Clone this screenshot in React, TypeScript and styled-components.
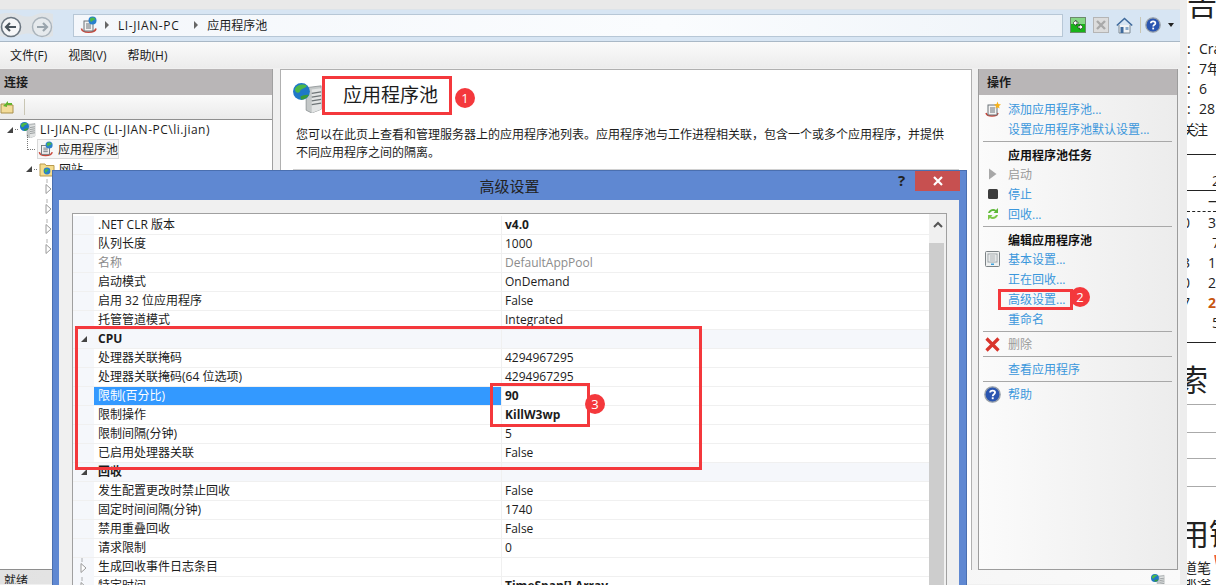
import styled, { createGlobalStyle } from "styled-components";

const GlobalStyle = createGlobalStyle`
  html, body {
    margin: 0;
    padding: 0;
    background: #fff;
  }
  body {
    font-family: "Open Sans", "Noto Sans CJK SC", sans-serif;
    font-size: 12px;
    color: #1c1c1c;
  }
`;

const Screen = styled.div`
  position: relative;
  display: flex;
  width: 1216px;
  height: 585px;
  overflow: hidden;
`;

const IisWindow = styled.div`
  display: flex;
  flex-direction: column;
  width: 1180px;
  height: 585px;
  background: #f0f0f0;
  flex: none;
`;

const TitleStrip = styled.div`
  height: 9px;
  background: #e9e9e9;
  flex: none;
`;

const AddressBar = styled.div`
  display: flex;
  align-items: center;
  height: 33px;
  box-sizing: border-box;
  padding-bottom: 1px;
  background: #d7e5f3;
  border-top: 1px solid #dde3e8;
  border-bottom: 1px solid #a9b8c6;
  flex: none;
`;

const NavButtons = styled.div`
  display: flex;
  align-items: center;
  width: 73px;
  padding-top: 2px;
`;

const AddressField = styled.div`
  display: flex;
  align-items: center;
  width: 990px;
  height: 23px;
  box-sizing: border-box;
  padding-left: 6px;
  background: linear-gradient(90deg, #f4f7fb, #fafcfe 60%, #eff4f9);
  border: 1px solid #b7c7d6;
`;

const Crumb = styled.span<{ $latin?: boolean }>`
  margin-left: 9px;
  letter-spacing: ${(p) => (p.$latin ? "0.6px" : "0")};
`;

const CrumbArrow = styled.span<{ $gap: number }>`
  width: 0;
  height: 0;
  margin-left: ${(p) => p.$gap}px;
  border-left: 4px solid #666;
  border-top: 4px solid transparent;
  border-bottom: 4px solid transparent;
`;

const BarIcons = styled.div`
  display: flex;
  align-items: center;
  margin-left: 7px;
  gap: 7px;
`;

const BarHelp = styled.span`
  display: flex;
  margin-left: -3px;
`;

const MenuBar = styled.div`
  display: flex;
  align-items: center;
  gap: 21px;
  height: 26px;
  padding-left: 10px;
  background: linear-gradient(#fafafa, #ececec);
  flex: none;
`;

const Panels = styled.div`
  display: flex;
  height: 502px;
  padding-top: 1px;
  box-sizing: border-box;
  flex: none;
`;

const LeftPanel = styled.div`
  width: 273px;
  box-sizing: border-box;
  background: #fff;
  border-right: 1px solid #a0a0a0;
  border-bottom: 1px solid #8e8e8e;
  flex: none;
`;

const PanelHead = styled.div<{ $pad: number }>`
  display: flex;
  align-items: center;
  height: 26px;
  padding-left: ${(p) => p.$pad}px;
  background: #b9b6b7;
  font-weight: 700;
  font-size: 12px;
`;

const TreeTools = styled.div`
  display: flex;
  align-items: center;
  gap: 10px;
  height: 25px;
  box-sizing: border-box;
  background: linear-gradient(#fafafa, #eaeaea);
  border-bottom: 1px solid #8e8e8e;
`;

const ToolSep = styled.span`
  width: 1px;
  height: 16px;
  background: #c9c6b4;
`;

const Tree = styled.div`
  display: flex;
  flex-direction: column;
`;

const TreeRow = styled.div<{ $indent: number; $h?: number }>`
  display: flex;
  align-items: center;
  gap: 2px;
  height: ${(p) => p.$h ?? 20}px;
  padding-left: ${(p) => p.$indent}px;
  white-space: nowrap;
`;

const TreeOpen = styled.span`
  width: 0;
  height: 0;
  border-right: 6px solid #444;
  border-top: 6px solid transparent;
`;

const TreeDots = styled.span<{ $w: number; $stem?: boolean }>`
  position: relative;
  width: ${(p) => p.$w}px;
  border-top: 1px dotted #777;
  ${(p) =>
    p.$stem
      ? `&::before {
          content: "";
          position: absolute;
          left: 0;
          bottom: 0;
          height: 15px;
          border-left: 1px dotted #777;
        }`
      : ""}
`;

const TreeLabel = styled.span<{ $latin?: boolean }>`
  margin-left: 2px;
  letter-spacing: ${(p) => (p.$latin ? "0.5px" : "0")};
`;

const TreeSelected = styled.span`
  display: inline-flex;
  align-items: center;
  gap: 4px;
  height: 20px;
  width: 82px;
  box-sizing: border-box;
  border: 1px solid #d9d9d9;
  background: #f7f7f7;
`;

const CenterPanel = styled.div`
  width: 692px;
  margin-left: 7px;
  box-sizing: border-box;
  padding: 13px 12px 0 12px;
  background: #fff;
  border: 1px solid #b0b0b0;
  border-bottom: none;
  flex: none;
`;

const PageHead = styled.div`
  display: flex;
  align-items: flex-start;
  gap: 20px;
  height: 31px;
`;

const PageTitle = styled.h1`
  margin: 0;
  font-size: 19px;
  line-height: 24px;
  font-weight: 400;
`;

const PageText = styled.p`
  width: 650px;
  margin: 12px 0 0 3px;
  line-height: 18px;
`;

const PageRule = styled.div`
  height: 1px;
  margin-top: 7px;
  background: #d0d0d0;
`;

const ActionPanel = styled.div`
  width: 200px;
  margin-left: 6px;
  box-sizing: border-box;
  background: linear-gradient(90deg, #fbfbfb, #ececec);
  border: 1px solid #9c9c9c;
  border-top: none;
  flex: none;
`;

const ActionList = styled.div`
  display: flex;
  flex-direction: column;
  padding-top: 4px;
`;

const ActionRow = styled.div<{ $h?: number; $muted?: boolean; $bold?: boolean }>`
  display: flex;
  align-items: center;
  height: ${(p) => p.$h ?? 20}px;
  font-weight: ${(p) => (p.$bold ? 700 : 400)};
  color: ${(p) => (p.$bold ? "#111" : p.$muted ? "#9a9a9a" : "#3b97dc")};
  white-space: nowrap;
`;

const ActionIcon = styled.span`
  display: flex;
  align-items: center;
  justify-content: center;
  width: 27px;
  margin-right: 2px;
  flex: none;
`;

const ActionSep = styled.div<{ $tight?: boolean }>`
  height: 1px;
  margin: 2px 5px ${(p) => (p.$tight ? 2 : 3)}px 4px;
  background: #a8a8a8;
  flex: none;
`;

const StatusBar = styled.div`
  display: flex;
  align-items: flex-start;
  justify-content: space-between;
  height: 14px;
  padding: 1px 15px 0 4px;
  box-sizing: border-box;
  overflow: hidden;
  background: linear-gradient(90deg, #e2e2e2, #f4f4f4 70%, #fafafa);
  flex: none;
`;

const StatusIcon = styled.span`
  display: flex;
  margin-top: 3px;
`;

const SideStrip = styled.div`
  width: 36px;
  box-sizing: border-box;
  display: flex;
  flex-direction: column;
  background: #fff;
  border-left: 7px solid #ededed;
  overflow: hidden;
  flex: none;
  font-size: 14px;
  color: #222;
`;

const StripRow = styled.div<{ $h: number; $line?: string; $big?: boolean; $plain?: boolean }>`
  display: ${(p) => (p.$big || p.$plain ? "flex" : "grid")};
  grid-template-columns: 12px 1fr;
  align-items: ${(p) => (p.$big ? "flex-start" : "center")};
  height: ${(p) => p.$h}px;
  box-sizing: border-box;
  white-space: nowrap;
  overflow: hidden;
  flex: none;
  ${(p) => (p.$line ? `border-bottom: ${p.$line};` : "")}
  ${(p) => (p.$big ? "font-size: 30px; line-height: 30px;" : "")}
`;

const StripGlyph = styled.span<{ $shift?: number; $top?: number; $orange?: boolean }>`
  margin-left: ${(p) => p.$shift ?? 0}px;
  margin-top: ${(p) => p.$top ?? 0}px;
  color: ${(p) => (p.$orange ? "#c8560f" : "inherit")};
  font-weight: ${(p) => (p.$orange ? 700 : 400)};
  flex: none;
`;

const Dialog = styled.div`
  position: absolute;
  left: 52px;
  top: 170px;
  width: 915px;
  height: 420px;
  box-sizing: border-box;
  padding: 29px 7px 0 6px;
  background: #5f88d2;
  border: 1px solid #4a6fb0;
`;

const DialogTitle = styled.div`
  position: absolute;
  left: 0;
  right: 0;
  top: 4px;
  text-align: center;
  font-size: 15px;
  color: #222;
`;

const HelpMark = styled.span`
  position: absolute;
  left: 845px;
  top: -1px;
  font-size: 15px;
  font-weight: 700;
  color: #222;
`;

const CloseBtn = styled.span`
  position: absolute;
  right: 6px;
  top: 0;
  display: flex;
  align-items: center;
  justify-content: center;
  width: 45px;
  height: 20px;
  background: #c75050;
`;

const DialogClient = styled.div`
  height: 100%;
  box-sizing: border-box;
  padding: 13px 12px 0 13px;
  background: #f0f0f0;
`;

const Grid = styled.div`
  display: flex;
  height: 100%;
  box-sizing: border-box;
  background: #fff;
  border: 1px solid #a0a0a0;
  border-bottom: none;
`;

const GridBody = styled.div`
  flex: 1;
  min-width: 0;
  padding-top: 2px;
`;

const GridRow = styled.div<{ $section?: boolean }>`
  display: grid;
  grid-template-columns: 21px 407px 1fr;
  height: 19px;
  box-sizing: border-box;
  line-height: 18px;
  background: ${(p) => (p.$section ? "#f5f7fb" : "#fff")};
  border-bottom: 1px solid #f0f0f0;
`;

const Gutter = styled.div`
  display: flex;
  align-items: center;
  justify-content: center;
  background: #f5f7fb;
`;

const NameCell = styled.div<{ $sel?: boolean; $muted?: boolean; $bold?: boolean }>`
  padding-left: 4px;
  background: ${(p) => (p.$sel ? "#3399ff" : "transparent")};
  color: ${(p) => (p.$sel ? "#fff" : p.$muted ? "#8c8c8c" : "#1c1c1c")};
  font-weight: ${(p) => (p.$bold ? 700 : 400)};
  white-space: nowrap;
`;

const ValueCell = styled.div<{ $muted?: boolean; $bold?: boolean }>`
  padding-left: 3px;
  border-left: 1px solid #f0f0f0;
  color: ${(p) => (p.$muted ? "#8c8c8c" : "#1c1c1c")};
  font-weight: ${(p) => (p.$bold ? 700 : 400)};
  white-space: nowrap;
`;

const GutterOpen = styled.span`
  width: 0;
  height: 0;
  border-right: 6px solid #444;
  border-top: 6px solid transparent;
`;

const ScrollBar = styled.div`
  display: flex;
  flex-direction: column;
  width: 17px;
  background: #f0f0f0;
  flex: none;
`;

const ScrollUp = styled.div`
  display: flex;
  align-items: center;
  justify-content: center;
  height: 20px;
`;

const ScrollThumb = styled.div`
  flex: 1;
  margin: 9px 2px 0 0;
  background: #cdcdcd;
`;

const RedBox = styled.div<{ $x: number; $y: number; $w: number; $h: number }>`
  position: absolute;
  left: ${(p) => p.$x}px;
  top: ${(p) => p.$y}px;
  width: ${(p) => p.$w}px;
  height: ${(p) => p.$h}px;
  box-sizing: border-box;
  border: 3px solid #f4383c;
`;

const Badge = styled.div<{ $x: number; $y: number }>`
  position: absolute;
  left: ${(p) => p.$x - 10}px;
  top: ${(p) => p.$y - 10}px;
  display: flex;
  align-items: center;
  justify-content: center;
  width: 20px;
  height: 20px;
  border-radius: 50%;
  background: #f4383c;
  color: #fff;
  font-size: 13px;
`;

const ServerGlobeIcon = ({ size = 16 }: { size?: number }) => (
  <svg width={size} height={size} viewBox="0 0 32 32">
    <path d="M14 5 L30 3 V28 L20 32 L14 29 Z" fill="#c4c8c8" stroke="#858b8d" strokeWidth="0.8" />
    <path d="M20 7 L30 5.5 V28 L20 32 Z" fill="#e2e4e4" />
    <path d="M20 11 L30 9.5 M20 15 L30 13.5 M20 19 L30 17.5 M20 23 L30 21.5" stroke="#6e7476" strokeWidth="1.3" />
    <circle cx="9" cy="9" r="9" fill="#1f78c8" />
    <path d="M2 6 C5 1 11 0.5 15 3 C13 6.5 8.5 5.5 7.5 9 C5.5 12 2 10 2 6 Z" fill="#4cb848" />
    <path d="M8 14.5 C11 12.5 15 12.5 17 12.5 C15 16.5 11 18 8.5 17.5 Z" fill="#3a9a3a" />
  </svg>
);

const AppPoolIcon = () => (
  <svg width="18" height="18" viewBox="0 0 18 18">
    <path d="M1.5 12.5 C2 17.5 15 17.5 16 12.5" fill="none" stroke="#c9473a" strokeWidth="1.6" />
    <rect x="4" y="5" width="9" height="10" fill="#f3f3f3" stroke="#6b7378" />
    <path d="M6 8 H11 M6 10 H11 M6 12 H11" stroke="#6b7378" />
    <circle cx="12.5" cy="4.5" r="4" fill="#2a80cc" />
    <path d="M10 2.5 C12 1 14 1.5 15.5 3 C14 5 12 4 11.5 6 C10.5 6 9.8 4 10 2.5 Z" fill="#4cb848" />
  </svg>
);

const SiteFolderIcon = () => (
  <svg width="16" height="16" viewBox="0 0 16 16">
    <path d="M1 3 H6 L7 4.5 H15 V15 H1 Z" fill="#f5dc8c" stroke="#b89a4e" />
    <circle cx="8" cy="10" r="3.4" fill="#2a80cc" />
    <path d="M6 8.5 C7.5 7.5 9 8 9.5 9 C8.5 10.5 7.5 10 7 12 C6 11.5 5.5 10 6 8.5 Z" fill="#4cb848" />
  </svg>
);

const TreeClosedIcon = () => (
  <svg width="8" height="20" viewBox="0 0 8 20">
    <path d="M2 0.5 V1.5 M2 2.5 V3.5" stroke="#666" />
    <path d="M1 5.5 L6 10 L1 14.5 Z" fill="#fff" stroke="#9a9a9a" />
  </svg>
);

const NavIcons = () => (
  <svg width="54" height="26" viewBox="0 0 54 26">
    <path
      d="M0 1 C8 -1 14 -1 20 2 C26 4 30 4 35 2 C41 -1 47 -1 53 1 V23 C47 25 41 25 35 22 C30 20 26 20 20 22 C14 25 8 25 0 23 Z"
      fill="#dfe3e6"
    />
    <circle cx="11" cy="14" r="9.5" fill="#f6f7f8" stroke="#6b7680" strokeWidth="1.6" />
    <path d="M16 14 H6.5 M10 10 L6 14 L10 18" fill="none" stroke="#4a545c" strokeWidth="2.2" />
    <circle cx="42" cy="14" r="9.5" fill="#e6eaed" stroke="#a9b3bb" strokeWidth="1.4" />
    <path d="M37 14 H46.5 M43 10 L47 14 L43 18" fill="none" stroke="#9aa5ad" strokeWidth="2.2" />
  </svg>
);

const ConnectIcon = () => (
  <svg width="16" height="16" viewBox="0 0 16 16">
    <rect x="0.5" y="0.5" width="15" height="15" fill="#19b319" stroke="#6c8a6c" />
    <rect x="1" y="1" width="14" height="6" fill="#cfeecf" opacity="0.6" />
    <path d="M3 6 L6 3 V5 H8 V7 H6 V9 Z M13 10 L10 13 V11 H8 V9 H10 V7 Z" fill="#fff" stroke="#222" strokeWidth="0.6" />
  </svg>
);

const StopTileIcon = () => (
  <svg width="16" height="16" viewBox="0 0 16 16">
    <rect x="0.5" y="0.5" width="15" height="15" fill="#dcdcdc" stroke="#b5b5b5" />
    <path d="M4 4 L12 12 M12 4 L4 12" stroke="#a9a9a9" strokeWidth="2.4" />
  </svg>
);

const HomeIcon = () => (
  <svg width="17" height="17" viewBox="0 0 17 17">
    <path d="M3 8 V16 H14 V8" fill="#f1f3f5" stroke="#7e8a94" />
    <path d="M0.8 8.5 L8.5 1.5 L16.2 8.5" fill="none" stroke="#3f6a9c" strokeWidth="1.6" />
    <rect x="4.5" y="10" width="3" height="6" fill="#3f6a9c" />
    <rect x="9.5" y="10" width="3" height="3" fill="#88a9c9" />
  </svg>
);

const HelpIcon = ({ size = 16 }: { size?: number }) => (
  <svg width={size} height={size} viewBox="0 0 16 16">
    <circle cx="8" cy="8" r="7.2" fill="#2a55b0" stroke="#9aa2aa" strokeWidth="1.3" />
    <path d="M5.8 6.2 C5.8 3.8 10.4 3.8 10.4 6.2 C10.4 7.8 8.2 7.8 8.2 9.6" fill="none" stroke="#fff" strokeWidth="1.7" />
    <rect x="7.3" y="10.6" width="1.8" height="1.8" fill="#fff" />
  </svg>
);

const OpenFolderIcon = () => (
  <svg width="14" height="14" viewBox="0 0 14 14">
    <path d="M1 4 H5 L6 5 H13 V13 H1 Z" fill="#f3dc9a" stroke="#a8904c" />
    <path d="M3 6 L8 1 L8 3 H12 V5 H7 L7 7 Z" fill="#63b32e" />
  </svg>
);

const AddPoolIcon = () => (
  <svg width="16" height="16" viewBox="0 0 16 16">
    <path d="M1 12 C2 16 12 16 13 12" fill="none" stroke="#c9473a" strokeWidth="1.5" />
    <rect x="3" y="4" width="9" height="10" fill="#f3f3f3" stroke="#6b7378" />
    <path d="M5 7 H10 M5 9 H10 M5 11 H10" stroke="#6b7378" />
    <path d="M12.5 0.5 L13.4 3 L16 3.4 L14 5 L14.6 7.5 L12.5 6.2 L10.4 7.5 L11 5 L9 3.4 L11.6 3 Z" fill="#f7b21a" />
  </svg>
);

const PlayIcon = () => (
  <svg width="10" height="12" viewBox="0 0 10 12">
    <path d="M1 0.5 L8.5 6 L1 11.5 Z" fill="#a8a8a8" />
  </svg>
);

const StopIcon = () => (
  <svg width="10" height="10" viewBox="0 0 10 10">
    <rect width="10" height="10" rx="1.5" fill="#3d3d3d" />
  </svg>
);

const RecycleIcon = () => (
  <svg width="14" height="14" viewBox="0 0 14 14">
    <path d="M2 6 C3 2 8 1 10 3 L12 1 V6 H7.5 L9 4.5 C7.5 3.5 5 4 4 6 Z" fill="#5fb83a" />
    <path d="M12 8 C11 12 6 13 4 11 L2 13 V8 H6.5 L5 9.5 C6.5 10.5 9 10 10 8 Z" fill="#7cc84a" />
  </svg>
);

const BasicSettingsIcon = () => (
  <svg width="15" height="16" viewBox="0 0 15 16">
    <rect x="0.5" y="0.5" width="14" height="15" rx="1" fill="#eef0f0" stroke="#7b8286" />
    <rect x="3" y="3" width="9" height="8" fill="#fff" stroke="#9aa2a6" />
    <path d="M4.5 5 H10.5 M4.5 7 H10.5 M4.5 9 H10.5" stroke="#9aa2a6" />
    <rect x="6" y="12.5" width="3" height="1.5" fill="#3aa0dc" />
  </svg>
);

const DeleteIcon = () => (
  <svg width="15" height="15" viewBox="0 0 15 15">
    <path d="M1.5 1.5 L13.5 13.5 M13.5 1.5 L1.5 13.5" stroke="#d9342b" strokeWidth="3.2" />
  </svg>
);

type Row = {
  name: string;
  value?: string;
  section?: boolean;
  muted?: boolean;
  bold?: boolean;
  sel?: boolean;
  closed?: boolean;
};

const rows: Row[] = [
  { name: ".NET CLR 版本", value: "v4.0", bold: true },
  { name: "队列长度", value: "1000" },
  { name: "名称", value: "DefaultAppPool", muted: true },
  { name: "启动模式", value: "OnDemand" },
  { name: "启用 32 位应用程序", value: "False" },
  { name: "托管管道模式", value: "Integrated" },
  { name: "CPU", section: true },
  { name: "处理器关联掩码", value: "4294967295" },
  { name: "处理器关联掩码(64 位选项)", value: "4294967295" },
  { name: "限制(百分比)", value: "90", bold: true, sel: true },
  { name: "限制操作", value: "KillW3wp", bold: true },
  { name: "限制间隔(分钟)", value: "5" },
  { name: "已启用处理器关联", value: "False" },
  { name: "回收", section: true },
  { name: "发生配置更改时禁止回收", value: "False" },
  { name: "固定时间间隔(分钟)", value: "1740" },
  { name: "禁用重叠回收", value: "False" },
  { name: "请求限制", value: "0" },
  { name: "生成回收事件日志条目", closed: true },
  { name: "特定时间", value: "TimeSpan[] Array", bold: true, closed: true },
];

const App = () => {
  return (
    <Screen>
      <GlobalStyle />
      <IisWindow>
        <TitleStrip />
        <AddressBar>
          <NavButtons>
            <NavIcons />
          </NavButtons>
          <AddressField>
            <AppPoolIcon />
            <CrumbArrow $gap={7} />
            <Crumb $latin>LI-JIAN-PC</Crumb>
            <CrumbArrow $gap={15} />
            <Crumb>应用程序池</Crumb>
          </AddressField>
          <BarIcons>
            <ConnectIcon />
            <StopTileIcon />
            <HomeIcon />
            <ToolSep />
            <BarHelp>
              <HelpIcon />
            </BarHelp>
            <svg width="6" height="4" viewBox="0 0 6 4">
              <path d="M0 0 H6 L3 4 Z" fill="#222" />
            </svg>
          </BarIcons>
        </AddressBar>
        <MenuBar>
          <span>文件(F)</span>
          <span>视图(V)</span>
          <span>帮助(H)</span>
        </MenuBar>
        <Panels>
          <LeftPanel>
            <PanelHead $pad={4}>连接</PanelHead>
            <TreeTools>
              <OpenFolderIcon />
              <ToolSep />
            </TreeTools>
            <Tree>
              <TreeRow $indent={7} $h={19}>
                <TreeOpen />
                <TreeDots $w={3} />
                <ServerGlobeIcon />
                <TreeLabel $latin>LI-JIAN-PC (LI-JIAN-PC\li.jian)</TreeLabel>
              </TreeRow>
              <TreeRow $indent={27}>
                <TreeDots $w={8} $stem />
                <TreeSelected>
                  <AppPoolIcon />
                  <span>应用程序池</span>
                </TreeSelected>
              </TreeRow>
              <TreeRow $indent={26}>
                <TreeOpen />
                <TreeDots $w={3} />
                <SiteFolderIcon />
                <TreeLabel>网站</TreeLabel>
              </TreeRow>
              {[0, 1, 2, 3].map((i) => (
                <TreeRow $indent={45} key={i}>
                  <TreeClosedIcon />
                </TreeRow>
              ))}
            </Tree>
          </LeftPanel>
          <CenterPanel>
            <PageHead>
              <ServerGlobeIcon size={30} />
              <PageTitle>应用程序池</PageTitle>
            </PageHead>
            <PageText>
              您可以在此页上查看和管理服务器上的应用程序池列表。应用程序池与工作进程相关联，包含一个或多个应用程序，并提供不同应用程序之间的隔离。
            </PageText>
            <PageRule />
          </CenterPanel>
          <ActionPanel>
            <PanelHead $pad={8}>操作</PanelHead>
            <ActionList>
              <ActionRow>
                <ActionIcon><AddPoolIcon /></ActionIcon>添加应用程序池...
              </ActionRow>
              <ActionRow>
                <ActionIcon />设置应用程序池默认设置...
              </ActionRow>
              <ActionSep />
              <ActionRow $h={19} $bold>
                <ActionIcon />应用程序池任务
              </ActionRow>
              <ActionRow $muted>
                <ActionIcon><PlayIcon /></ActionIcon>启动
              </ActionRow>
              <ActionRow>
                <ActionIcon><StopIcon /></ActionIcon>停止
              </ActionRow>
              <ActionRow>
                <ActionIcon><RecycleIcon /></ActionIcon>回收...
              </ActionRow>
              <ActionSep />
              <ActionRow $h={19} $bold>
                <ActionIcon />编辑应用程序池
              </ActionRow>
              <ActionRow>
                <ActionIcon><BasicSettingsIcon /></ActionIcon>基本设置...
              </ActionRow>
              <ActionRow>
                <ActionIcon />正在回收...
              </ActionRow>
              <ActionRow>
                <ActionIcon />高级设置...
              </ActionRow>
              <ActionRow>
                <ActionIcon />重命名
              </ActionRow>
              <ActionSep $tight />
              <ActionRow $muted>
                <ActionIcon><DeleteIcon /></ActionIcon>删除
              </ActionRow>
              <ActionSep $tight />
              <ActionRow>
                <ActionIcon />查看应用程序
              </ActionRow>
              <ActionSep $tight />
              <ActionRow>
                <ActionIcon><HelpIcon size={17} /></ActionIcon>帮助
              </ActionRow>
            </ActionList>
          </ActionPanel>
        </Panels>
        <StatusBar>
          <span>就绪</span>
          <StatusIcon>
            <ServerGlobeIcon size={14} />
          </StatusIcon>
        </StatusBar>
      </IisWindow>
      <SideStrip>
        <StripRow $h={38} $big><StripGlyph $top={-11}>告</StripGlyph></StripRow>
        <StripRow $h={20}><span>:</span><span>Cra</span></StripRow>
        <StripRow $h={20}><span>:</span><span>7年</span></StripRow>
        <StripRow $h={20}><span>:</span><span>6</span></StripRow>
        <StripRow $h={20}><span>:</span><span>28</span></StripRow>
        <StripRow $h={22}><StripGlyph $shift={-5}>关</StripGlyph><StripGlyph $shift={-5}>注</StripGlyph></StripRow>
        <StripRow $h={15} $line="1px solid #222" />
        <StripRow $h={15} />
        <StripRow $h={21} $line="1px solid #222"><span /><StripGlyph $shift={13}>2</StripGlyph></StripRow>
        <StripRow $h={21} $line="1px dashed #222"><StripGlyph $shift={-5}>-</StripGlyph><StripGlyph $shift={9}>一</StripGlyph></StripRow>
        <StripRow $h={20}><StripGlyph $shift={-5}>0</StripGlyph><StripGlyph $shift={9}>3</StripGlyph></StripRow>
        <StripRow $h={20}><span /><StripGlyph $shift={13}>7</StripGlyph></StripRow>
        <StripRow $h={20}><StripGlyph $shift={-5}>3</StripGlyph><StripGlyph $shift={9}>1</StripGlyph></StripRow>
        <StripRow $h={20}><StripGlyph $shift={-5}>0</StripGlyph><StripGlyph $shift={9}>2</StripGlyph></StripRow>
        <StripRow $h={20}><StripGlyph $shift={-5}>7</StripGlyph><StripGlyph $shift={9} $orange>2</StripGlyph></StripRow>
        <StripRow $h={20}><span /><StripGlyph $shift={13}>5</StripGlyph></StripRow>
        <StripRow $h={11} $line="1px solid #222" />
        <StripRow $h={62} $line="1px solid #aaa" $big><StripGlyph $shift={-9} $top={22}>索</StripGlyph></StripRow>
        <StripRow $h={28} $line="1px solid #aaa" />
        <StripRow $h={26} $line="1px solid #aaa" />
        <StripRow $h={28} $line="1px solid #aaa" />
        <StripRow $h={68} $big><StripGlyph $shift={-8} $top={32}>用铲</StripGlyph></StripRow>
        <StripRow $h={24} $plain>
          <StripGlyph $shift={-4}>道笔</StripGlyph>
          <StripGlyph $shift={3}>
            <svg width="6" height="22" viewBox="0 0 6 22">
              <path d="M0 0 H6 V22 C3 16 1 8 0 0 Z" fill="#f0622e" />
            </svg>
          </StripGlyph>
        </StripRow>
        <StripRow $h={6} $plain><StripGlyph $shift={-4}>那涂</StripGlyph></StripRow>
      </SideStrip>

      <Dialog>
        <DialogTitle>高级设置</DialogTitle>
        <HelpMark>?</HelpMark>
        <CloseBtn>
          <svg width="10" height="10" viewBox="0 0 10 10">
            <path d="M1 1 L9 9 M9 1 L1 9" stroke="#fff" strokeWidth="2.2" />
          </svg>
        </CloseBtn>
        <DialogClient>
          <Grid>
            <GridBody>
              {rows.map((r) => (
                <GridRow key={r.name} $section={r.section}>
                  <Gutter>
                    {r.section && <GutterOpen />}
                    {r.closed && <TreeClosedIcon />}
                  </Gutter>
                  <NameCell $sel={r.sel} $muted={r.muted} $bold={r.section}>{r.name}</NameCell>
                  <ValueCell $muted={r.muted} $bold={r.bold}>{r.value}</ValueCell>
                </GridRow>
              ))}
            </GridBody>
            <ScrollBar>
              <ScrollUp>
                <svg width="10" height="7" viewBox="0 0 10 7">
                  <path d="M1 6 L5 2 L9 6" fill="none" stroke="#555" strokeWidth="2" />
                </svg>
              </ScrollUp>
              <ScrollThumb />
            </ScrollBar>
          </Grid>
        </DialogClient>
      </Dialog>

      <RedBox $x={322} $y={76} $w={130} $h={39} />
      <Badge $x={465} $y={98}>1</Badge>
      <RedBox $x={998} $y={289} $w={75} $h={21} />
      <Badge $x={1080} $y={297}>2</Badge>
      <RedBox $x={75} $y={326} $w={627} $h={144} />
      <RedBox $x={490} $y={383} $w={100} $h={44} />
      <Badge $x={595} $y={404}>3</Badge>
    </Screen>
  );
};

export default App;
